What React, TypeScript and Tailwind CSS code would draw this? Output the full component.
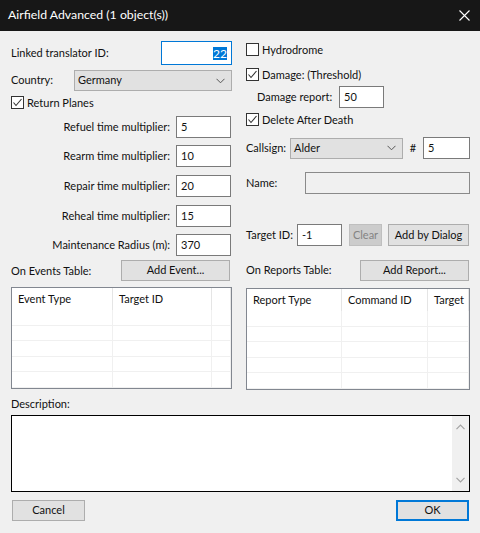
import React from "react";

const Check = ({ checked }: { checked?: boolean }) => (
    <div className="flex h-[13px] w-[13px] shrink-0 items-center justify-center border border-[#333333] bg-white">
        {checked && (
            <svg width="11" height="11" viewBox="0 0 11 11">
                <polyline points="1.5,5.5 4,8.5 9.5,2" fill="none" stroke="#333333" strokeWidth="1.1" />
            </svg>
        )}
    </div>
);

const CheckRow = ({ label, checked }: { label: string; checked?: boolean }) => (
    <div className="flex h-[13px] items-center gap-[3px]">
        <Check checked={checked} />
        <span className="leading-[13px]">{label}</span>
    </div>
);

const Chevron = () => (
    <svg width="9" height="6" viewBox="0 0 9 6" className="shrink-0">
        <polyline points="0.5,0.8 4.5,4.8 8.5,0.8" fill="none" stroke="#555555" strokeWidth="1" />
    </svg>
);

const Select = ({ value, className }: { value: string; className: string }) => (
    <div className={`flex h-[21px] items-center justify-between border border-[#adadad] bg-[#e1e1e1] pl-[3px] pr-[6px] ${className}`}>
        <span>{value}</span>
        <Chevron />
    </div>
);

const Field = ({ value, className }: { value?: string; className: string }) => (
    <div className={`h-[22px] shrink-0 border border-[#7a7a7a] bg-white px-[4px] leading-[19px] ${className}`}>
        {value}
    </div>
);

const Button = ({ label, className }: { label: string; className: string }) => (
    <div className={`flex h-[21px] shrink-0 items-center justify-center border border-[#adadad] bg-[#e1e1e1] ${className}`}>
        {label}
    </div>
);

const NumRow = ({ label, value }: { label: string; value: string }) => (
    <div className="flex h-[22px] items-center justify-end gap-[6px] pr-[1px]">
        <span>{label}</span>
        <Field value={value} className="w-[55px]" />
    </div>
);

const Table = ({ cols }: { cols: { title: string; w: number }[] }) => (
    <div className="flex h-[102px] overflow-hidden border border-[#828790] bg-white">
        {cols.map((c, i) => (
            <div
                key={i}
                className={`flex shrink-0 flex-col ${i === cols.length - 1 ? "grow" : ""}`}
                style={{ width: c.w }}
            >
                <div className="flex h-[24px] items-center overflow-hidden border-r border-[#e5e5e5] pl-[6px]">
                    {c.title}
                </div>
                {[0, 1, 2, 3, 4].map((r) => (
                    <div key={r} className="h-[17px] border-b border-r border-[#f0f0f0]" />
                ))}
            </div>
        ))}
    </div>
);

export default function App() {
    return (
        <div className="h-[533px] w-[480px] overflow-hidden whitespace-nowrap bg-[#f0f0f0] font-['Lato',sans-serif] text-[11px] text-[#111111]">
            {/* title bar */}
            <div className="flex h-[31px] items-center justify-between bg-[#171717] pl-[8px] pr-[10px] text-[12.3px] text-white">
                <span>Airfield Advanced (1 object(s))</span>
                <svg width="11" height="11" viewBox="0 0 11 11">
                    <path d="M0.5 0.5 L10.5 10.5 M10.5 0.5 L0.5 10.5" stroke="#ffffff" strokeWidth="1.1" />
                </svg>
            </div>

            <div className="flex flex-col pl-[11px] pr-[10px]">
                <div className="grid grid-cols-[221px_224px] gap-x-[14px]">
                    {/* left column */}
                    <div className="flex flex-col">
                        <div className="mt-[10px] flex h-[24px] items-center justify-between">
                            <span>Linked translator ID:</span>
                            <div className="flex h-[24px] w-[71px] items-center justify-end border border-[#0078d7] bg-white pr-[4px]">
                                <span className="bg-[#0078d7] text-[12px] leading-[13px] text-white">22</span>
                            </div>
                        </div>
                        <div className="mt-[5px] flex h-[21px] items-center">
                            <span className="w-[63px]">Country:</span>
                            <Select value="Germany" className="w-[158px]" />
                        </div>
                        <div className="mt-[5px]">
                            <CheckRow label="Return Planes" checked />
                        </div>
                        <div className="mt-[7px]">
                            <NumRow label="Refuel time multiplier:" value="5" />
                        </div>
                        <div className="mt-[7px]">
                            <NumRow label="Rearm time multiplier:" value="10" />
                        </div>
                        <div className="mt-[8px]">
                            <NumRow label="Repair time multiplier:" value="20" />
                        </div>
                        <div className="mt-[8px]">
                            <NumRow label="Reheal time multiplier:" value="15" />
                        </div>
                        <div className="mt-[7px]">
                            <NumRow label="Maintenance Radius (m):" value="370" />
                        </div>
                        <div className="mt-[4px] flex h-[21px] items-center justify-between pr-[2px]">
                            <span className="pt-[2px]">On Events Table:</span>
                            <Button label="Add Event..." className="w-[109px]" />
                        </div>
                        <div className="mt-[6px]">
                            <Table
                                cols={[
                                    { title: "Event Type", w: 101 },
                                    { title: "Target ID", w: 99 },
                                    { title: "", w: 19 },
                                ]}
                            />
                        </div>
                    </div>

                    {/* right column */}
                    <div className="flex flex-col">
                        <div className="mt-[12px]">
                            <CheckRow label="Hydrodrome" />
                        </div>
                        <div className="mt-[12px]">
                            <CheckRow label="Damage: (Threshold)" checked />
                        </div>
                        <div className="mt-[5px] flex h-[22px] items-center pl-[11px]">
                            <span className="w-[82px]">Damage report:</span>
                            <Field value="50" className="w-[45px]" />
                        </div>
                        <div className="mt-[5px]">
                            <CheckRow label="Delete After Death" checked />
                        </div>
                        <div className="mt-[11px] flex h-[22px] items-center">
                            <span className="w-[44px]">Callsign:</span>
                            <Select value="Alder" className="w-[113px]" />
                            <span className="w-[20px] text-center">#</span>
                            <Field value="5" className="w-[47px]" />
                        </div>
                        <div className="mt-[13px] flex h-[22px] items-center">
                            <span className="w-[59px]">Name:</span>
                            <div className="h-[22px] w-[165px] border border-[#8a8a8a] bg-[#f0f0f0]" />
                        </div>
                        <div className="mt-[30px] flex h-[22px] items-center">
                            <span className="w-[51px]">Target ID:</span>
                            <Field value="-1" className="w-[45px]" />
                            <div className="ml-[7px] flex h-[22px] w-[33px] items-center justify-center border border-[#bfbfbf] bg-[#cccccc] text-[#838383]">
                                Clear
                            </div>
                            <Button label="Add by Dialog" className="ml-[6px] h-[22px] w-[81px]" />
                        </div>
                        <div className="mt-[14px] flex h-[21px] items-center justify-between pr-[1px]">
                            <span>On Reports Table:</span>
                            <Button label="Add Report..." className="w-[109px]" />
                        </div>
                        <div className="mt-[7px]">
                            <Table
                                cols={[
                                    { title: "Report Type", w: 95 },
                                    { title: "Command ID", w: 86 },
                                    { title: "Target", w: 41 },
                                ]}
                            />
                        </div>
                    </div>
                </div>

                <div className="mt-[6px] leading-[16px]">Description:</div>
                <div className="mt-[3px] flex h-[77px] justify-end border border-black bg-white">
                    <div className="flex w-[17px] flex-col items-center justify-between bg-[#f0f0f0] py-[8px]">
                        <svg width="9" height="6" viewBox="0 0 9 6">
                            <polyline points="0.5,5.2 4.5,1.2 8.5,5.2" fill="none" stroke="#a3a3a3" strokeWidth="1.2" />
                        </svg>
                        <svg width="9" height="6" viewBox="0 0 9 6">
                            <polyline points="0.5,0.8 4.5,4.8 8.5,0.8" fill="none" stroke="#a3a3a3" strokeWidth="1.2" />
                        </svg>
                    </div>
                </div>

                <div className="mt-[8px] flex items-center justify-between px-[1px]">
                    <Button label="Cancel" className="w-[73px]" />
                    <div className="flex h-[21px] w-[73px] items-center justify-center border-2 border-[#0078d7] bg-[#e1e1e1]">
                        OK
                    </div>
                </div>
            </div>
        </div>
    );
}
